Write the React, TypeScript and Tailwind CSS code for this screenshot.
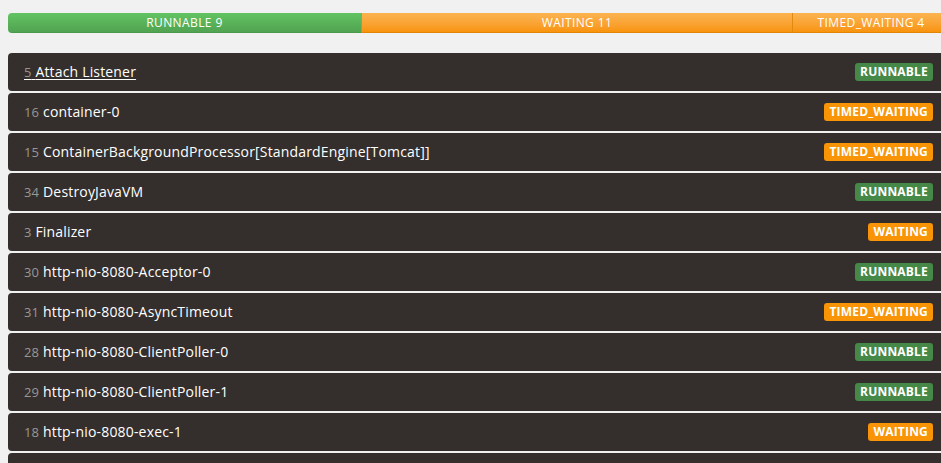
const threads: { id: number; name: string; state: string }[] = [
  { id: 5, name: "Attach Listener", state: "RUNNABLE" },
  { id: 16, name: "container-0", state: "TIMED_WAITING" },
  { id: 15, name: "ContainerBackgroundProcessor[StandardEngine[Tomcat]]", state: "TIMED_WAITING" },
  { id: 34, name: "DestroyJavaVM", state: "RUNNABLE" },
  { id: 3, name: "Finalizer", state: "WAITING" },
  { id: 30, name: "http-nio-8080-Acceptor-0", state: "RUNNABLE" },
  { id: 31, name: "http-nio-8080-AsyncTimeout", state: "TIMED_WAITING" },
  { id: 28, name: "http-nio-8080-ClientPoller-0", state: "RUNNABLE" },
  { id: 29, name: "http-nio-8080-ClientPoller-1", state: "RUNNABLE" },
  { id: 18, name: "http-nio-8080-exec-1", state: "WAITING" },
  { id: 19, name: "http-nio-8080-exec-2", state: "WAITING" },
];

function StateBadge({ state }: { state: string }) {
  const color = state === "RUNNABLE" ? "bg-[#468847]" : "bg-[#f89406]";
  return (
    <span className={`${color} rounded-[3px] px-[5px] h-[18px] leading-[18px] text-[12px] font-bold tracking-[0.2px] text-white`}>
      {state}
    </span>
  );
}

export default function App() {
  return (
    <div className="min-h-screen h-[463px] overflow-hidden bg-[#f1f1f1] font-['Open_Sans',sans-serif]">
      <div className="ml-2 w-[941px] pt-[13px]">
        <div className="flex h-5 rounded-[4px] overflow-hidden text-[12px] tracking-[0.4px] text-white leading-5">
          <div className="w-[37.5%] text-center bg-gradient-to-b from-[#62c462] to-[#51a351] border-b border-[#4a9a4a]">
            RUNNABLE 9
          </div>
          <div className="w-[45.83%] text-center bg-gradient-to-b from-[#fbb450] to-[#f89406] border-l border-[#e08a10] border-b border-b-[#e08506]">
            WAITING 11
          </div>
          <div className="flex-1 text-center bg-gradient-to-b from-[#fbb450] to-[#f89406] border-l border-[#e08a10] border-b border-b-[#e08506]">
            TIMED_WAITING 4
          </div>
        </div>
        <div className="mt-5 flex flex-col gap-[2px]">
          {threads.map((t, i) => (
            <div
              key={t.id}
              className="flex h-[38px] items-center justify-between rounded-[4px] bg-[#342f2d] pl-4 pr-4"
            >
              <span className={`text-[14px] tracking-[0.17px] text-white ${i === 0 ? "underline underline-offset-2" : ""}`}>
                <span className="text-[13px] text-[#9a9694]">{t.id}</span> {t.name}
              </span>
              <StateBadge state={t.state} />
            </div>
          ))}
        </div>
      </div>
    </div>
  );
}
